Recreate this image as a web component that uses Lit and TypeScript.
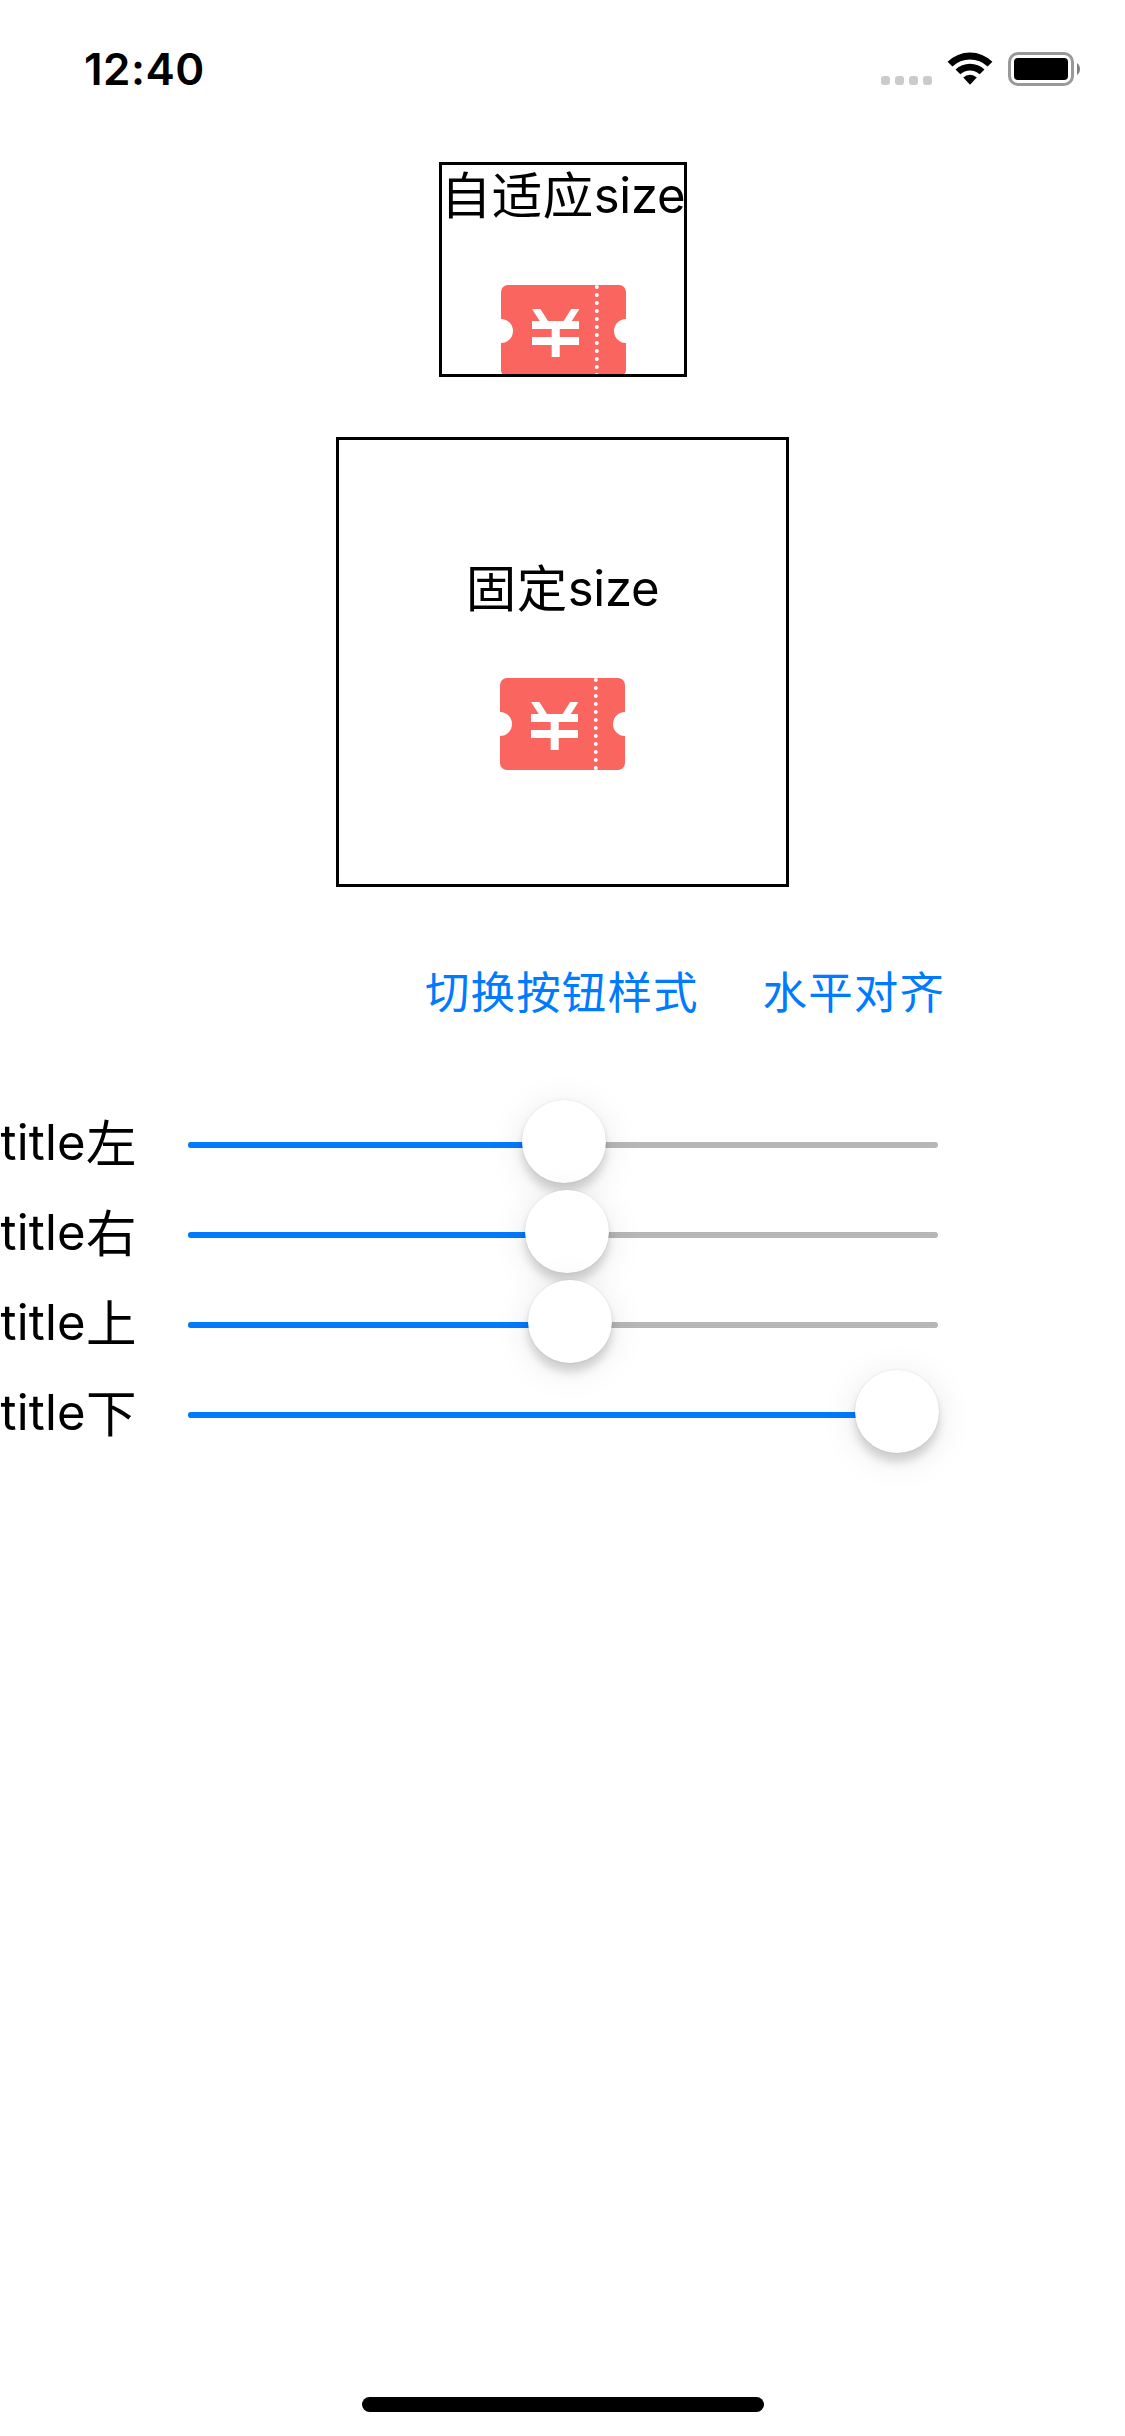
import { LitElement, html, css, svg } from "lit";
import { customElement, property } from "lit/decorators.js";

@customElement("status-bar")
class StatusBar extends LitElement {
  static styles = css`
    :host { display: flex; justify-content: space-between; height: 132px; box-sizing: border-box; padding: 52px 43px 0 84px; }
    .time { font: 600 44px/34px Inter, sans-serif; letter-spacing: 0.5px; color: #000; }
    .icons { display: flex; height: 34px; }
    .signal { display: flex; gap: 5px; padding-top: 24px; margin-right: 15px; }
    .dot { width: 9px; height: 9px; border-radius: 3px; background: #cbcbcb; }
    .wifi { margin-right: 15px; }
  `;
  render() {
    return html`
      <div class="time">12:40</div>
      <div class="icons">
        <div class="signal">${[0, 1, 2, 3].map(() => html`<span class="dot"></span>`)}</div>
        <svg class="wifi" width="46" height="34" viewBox="0 0 46 34">
          <path d="M0.6 9.7A32 32 0 0 1 45.4 9.7L40.6 14.5A25.4 25.4 0 0 0 5.4 14.5Z" />
          <path d="M8.5 17.6A20.8 20.8 0 0 1 37.5 17.6L32.7 22.3A14 14 0 0 0 13.3 22.3Z" />
          <path d="M16.2 25.5A9.8 9.8 0 0 1 29.8 25.5L23 32.8Z" />
        </svg>
        <svg width="74" height="34" viewBox="0 0 74 34">
          <rect x="1.5" y="1.5" width="63" height="31" rx="8.5" fill="none" stroke="#999" stroke-width="3" />
          <rect x="6" y="6" width="54" height="22" rx="4" />
          <path d="M69 11A7.5 7.5 0 0 1 69 23Z" fill="#808080" />
        </svg>
      </div>`;
  }
}

@customElement("coupon-box")
class CouponBox extends LitElement {
  @property() cjk = "";
  @property() latin = "";
  static styles = css`
    :host { display: flex; flex-direction: column; align-items: center; box-sizing: border-box; border: 3px solid #000; overflow: hidden; }
    .label { display: flex; height: 60px; line-height: 60px; white-space: nowrap; color: #000; }
    .cjk { font-family: "Noto Sans CJK SC", sans-serif; font-size: 50.5px; line-height: 55px; letter-spacing: 0.5px; }
    .latin { font-family: Inter, sans-serif; font-size: 49px; line-height: 61px; letter-spacing: -0.3px; }
    .ticket { flex: none; margin-top: 60px; }
  `;
  render() {
    const dots = Array.from({ length: 12 }, (_, i) => 2 + i * 8);
    return html`
      <div class="label"><span class="cjk">${this.cjk}</span><span class="latin">${this.latin}</span></div>
      <svg class="ticket" width="125" height="92" viewBox="0 0 125 92">
        <path fill="#fa655f" d="M7 0H118A7 7 0 0 1 125 7V34A12 12 0 0 0 125 58V85A7 7 0 0 1 118 92H7A7 7 0 0 1 0 85V58A12 12 0 0 0 0 34V7A7 7 0 0 1 7 0Z" />
        <g fill="#fff">
          ${dots.map((y) => svg`<circle cx="95.8" cy=${y} r="2" />`)}
          <path d="M31 24H39.4L47 36H62.6L70.2 24H78.4L70.8 36H78V44H58.7V52H78V60H58.7V72H50.7V60H31V52H50.7V44H31V36H38.8Z" />
        </g>
      </svg>`;
  }
}

@customElement("inset-slider")
class InsetSlider extends LitElement {
  @property() side = "";
  @property({ type: Number }) offset = 0;
  static styles = css`
    :host { display: flex; align-items: center; height: 90px; }
    .label { display: flex; box-sizing: border-box; width: 188px; height: 64px; flex: none; line-height: 60px; color: #000; }
    .latin { font-family: Inter, sans-serif; font-size: 49px; letter-spacing: 0.2px; padding-left: 0.5px; }
    .cjk { font-family: "Noto Sans CJK SC", sans-serif; font-size: 50.5px; line-height: 55px; }
    .track { position: relative; width: 750px; height: 6px; border-radius: 3px; background: #b6b6b6; }
    .fill { height: 6px; border-radius: 3px; background: #007aff; }
    .knob { position: absolute; top: -42.5px; width: 83.5px; height: 83.5px; border-radius: 50%; background: #fff;
      box-shadow: 0 0 2px rgba(0, 0, 0, 0.12), 0 9px 9px rgba(0, 0, 0, 0.14), 0 6px 36px rgba(0, 0, 0, 0.1); }
  `;
  render() {
    return html`
      <div class="label"><span class="latin">title</span><span class="cjk">${this.side}</span></div>
      <div class="track">
        <div class="fill" style="width:${this.offset + 42}px"></div>
        <div class="knob" style="left:${this.offset}px"></div>
      </div>`;
  }
}

@customElement("app-root")
class AppRoot extends LitElement {
  static styles = css`
    :host { display: flex; flex-direction: column; width: 1125px; height: 2436px; background: #fff; overflow: hidden; }
    .fit { align-self: center; width: 248px; height: 215px; margin-top: 30px; padding-left: 1px; }
    .fixed { align-self: center; width: 453px; height: 450px; margin-top: 60px; padding-top: 118px; }
    .actions { display: flex; gap: 64px; margin-top: 73px; padding-left: 425px; height: 60px; line-height: 60px;
      font-family: "Noto Sans CJK SC", sans-serif; font-size: 44.5px; letter-spacing: 1.1px; color: #007aff; white-space: nowrap; }
    .sliders { display: flex; flex-direction: column; margin-top: 80px; }
    .home { align-self: center; width: 402px; height: 15px; border-radius: 8px; background: #000; margin-top: auto; margin-bottom: 24px; }
  `;
  private rows = [
    { side: "左", offset: 334 },
    { side: "右", offset: 337 },
    { side: "上", offset: 340 },
    { side: "下", offset: 667 },
  ];
  render() {
    return html`
      <status-bar></status-bar>
      <coupon-box class="fit" cjk="自适应" latin="size"></coupon-box>
      <coupon-box class="fixed" cjk="固定" latin="size"></coupon-box>
      <div class="actions"><span>切换按钮样式</span><span>水平对齐</span></div>
      <div class="sliders">
        ${this.rows.map((r) => html`<inset-slider side=${r.side} .offset=${r.offset}></inset-slider>`)}
      </div>
      <div class="home"></div>`;
  }
}
